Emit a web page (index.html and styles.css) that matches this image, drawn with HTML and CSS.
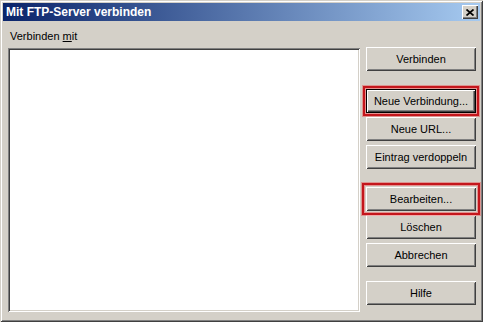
FILE: index.html
```html
<!DOCTYPE html>
<html lang="de">

<head>
    <meta charset="UTF-8">
    <title>Mit FTP-Server verbinden</title>
    <link rel="stylesheet" href="styles.css">
</head>

<body>
    <div class="fenster">
        <div class="titelleiste">
            <span class="titel">Mit FTP-Server verbinden</span>
            <button class="btn-schliessen" title="Schließen">
                <svg width="8" height="7" viewBox="0 0 8 7">
                    <path d="M0.5 0.5 L7.5 6.5 M7.5 0.5 L0.5 6.5" stroke="#000" stroke-width="1.7" fill="none"/>
                </svg>
            </button>
        </div>
        <div class="inhalt">
            <div class="links">
                <label class="beschriftung">Verbinden <u>m</u>it</label>
                <div class="liste"></div>
            </div>
            <div class="knoepfe">
                <button class="btn">Verbinden</button>
                <div class="gruppe">
                    <button class="btn standard markiert">Neue Verbindung...</button>
                    <button class="btn">Neue URL...</button>
                    <button class="btn">Eintrag verdoppeln</button>
                </div>
                <div class="gruppe">
                    <button class="btn markiert">Bearbeiten...</button>
                    <button class="btn">Löschen</button>
                    <button class="btn">Abbrechen</button>
                </div>
                <button class="btn hilfe">Hilfe</button>
            </div>
        </div>
    </div>
</body>

</html>
```

FILE: styles.css
```css
body {
    margin: 0;
    font-family: 'Liberation Sans', Arial, sans-serif;
    font-size: 11px;
    background: #d4d0c8;
}

.fenster {
    width: 483px;
    height: 322px;
    box-sizing: border-box;
    padding: 3px;
    background: #d4d0c8;
    box-shadow: inset 1px 1px #d4d0c8, inset -1px -1px #404040,
        inset 2px 2px #ffffff, inset -2px -2px #808080;
    display: flex;
    flex-direction: column;
}

.titelleiste {
    height: 18px;
    background: linear-gradient(to right, #0a246a, #a6caf0);
    display: flex;
    align-items: center;
    justify-content: space-between;
    padding: 0 2px 0 2px;
}

.titel {
    color: white;
    font-weight: bold;
    font-size: 12px;
    padding-left: 1px;
}

.btn-schliessen {
    width: 16px;
    height: 14px;
    padding: 0;
    border: none;
    background: #d4d0c8;
    box-shadow: inset 1px 1px #ffffff, inset -1px -1px #404040,
        inset -2px -2px #808080;
    display: flex;
    align-items: center;
    justify-content: center;
}

.inhalt {
    flex: 1;
    display: flex;
    gap: 6px;
    padding: 0 4px 7px 5px;
}

.links {
    width: 352px;
    display: flex;
    flex-direction: column;
}

.beschriftung {
    padding: 9px 0 0 2px;
    height: 17px;
    color: #000;
}

.liste {
    flex: 1;
    margin-top: 1px;
    background: white;
    box-shadow: inset 1px 1px #808080, inset -1px -1px #ffffff,
        inset 2px 2px #404040, inset -2px -2px #d4d0c8;
}

.knoepfe {
    width: 110px;
    display: flex;
    flex-direction: column;
    padding-top: 26px;
}

.gruppe {
    display: flex;
    flex-direction: column;
    gap: 4px;
    margin-top: 18px;
}

.btn {
    height: 24px;
    padding: 0;
    border: none;
    background: #d4d0c8;
    font-family: 'Liberation Sans', Arial, sans-serif;
    font-size: 11px;
    color: #000;
    box-shadow: inset 1px 1px #ffffff, inset -1px -1px #404040,
        inset 2px 2px #d4d0c8, inset -2px -2px #808080;
}

.btn.standard {
    border: 1px solid #000;
    box-shadow: inset 1px 1px #ffffff, inset -1px -1px #404040,
        inset -2px -2px #808080;
}

.hilfe {
    margin-top: 14px;
}

/* rote Markierung über dem Knopf */
.markiert {
    position: relative;
}

.markiert::after {
    content: "";
    position: absolute;
    top: -4px;
    left: -4px;
    right: -4px;
    bottom: -4px;
    border: 2px solid #c4161c;
    box-shadow: 0 0 0 1px rgba(230, 90, 90, 0.5), inset 0 0 0 1px rgba(235, 120, 120, 0.7);
}
```
